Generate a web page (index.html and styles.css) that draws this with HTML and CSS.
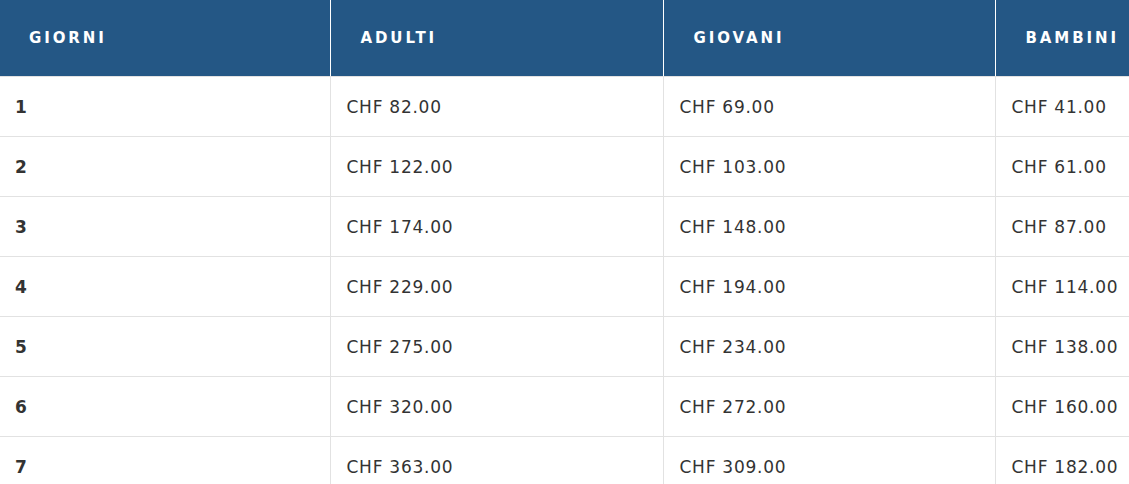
FILE: index.html
```html
<!DOCTYPE html>
<html lang="it">
<head>
<meta charset="utf-8">
<title>Prezzi</title>
<link rel="stylesheet" href="styles.css">
</head>
<body>
<table class="prices">
  <colgroup>
    <col class="c-first"><col class="c-second"><col class="c-other"><col class="c-other">
  </colgroup>
  <thead>
    <tr><th>Giorni</th><th>Adulti</th><th>Giovani</th><th>Bambini</th></tr>
  </thead>
  <tbody>
    <tr><td class="day">1</td><td>CHF 82.00</td><td>CHF 69.00</td><td>CHF 41.00</td></tr>
    <tr><td class="day">2</td><td>CHF 122.00</td><td>CHF 103.00</td><td>CHF 61.00</td></tr>
    <tr><td class="day">3</td><td>CHF 174.00</td><td>CHF 148.00</td><td>CHF 87.00</td></tr>
    <tr><td class="day">4</td><td>CHF 229.00</td><td>CHF 194.00</td><td>CHF 114.00</td></tr>
    <tr><td class="day">5</td><td>CHF 275.00</td><td>CHF 234.00</td><td>CHF 138.00</td></tr>
    <tr><td class="day">6</td><td>CHF 320.00</td><td>CHF 272.00</td><td>CHF 160.00</td></tr>
    <tr><td class="day">7</td><td>CHF 363.00</td><td>CHF 309.00</td><td>CHF 182.00</td></tr>
  </tbody>
</table>
</body>
</html>
```
FILE: styles.css
```css
html, body {
  margin: 0;
  padding: 0;
  background: #fff;
  overflow: hidden;
}
.prices {
  border-collapse: collapse;
  table-layout: fixed;
  width: 1327px;
  font-family: "DejaVu Sans", "Liberation Sans", sans-serif;
  color: #333;
}
.c-first { width: 330px; }
.c-second { width: 333px; }
.c-other { width: 332px; }
.prices th {
  height: 76px;
  box-sizing: border-box;
  background: #245785;
  color: #fff;
  text-align: left;
  text-transform: uppercase;
  font-weight: 700;
  font-size: 15px;
  letter-spacing: 2.9px;
  padding: 1px 0 0 30px;
  border-left: 1px solid #fff;
  border-bottom: 1px solid #e2e2e2;
}
.prices th:first-child {
  border-left: none;
  padding-left: 29px;
}
.prices td {
  height: 60px;
  box-sizing: border-box;
  padding: 2px 0 0 16px;
  font-size: 17px;
  letter-spacing: 0.75px;
  border-left: 1px solid #e2e2e2;
  border-bottom: 1px solid #e2e2e2;
  vertical-align: middle;
}
.prices td.day {
  border-left: none;
  padding-left: 15px;
  font-weight: 700;
}
```
